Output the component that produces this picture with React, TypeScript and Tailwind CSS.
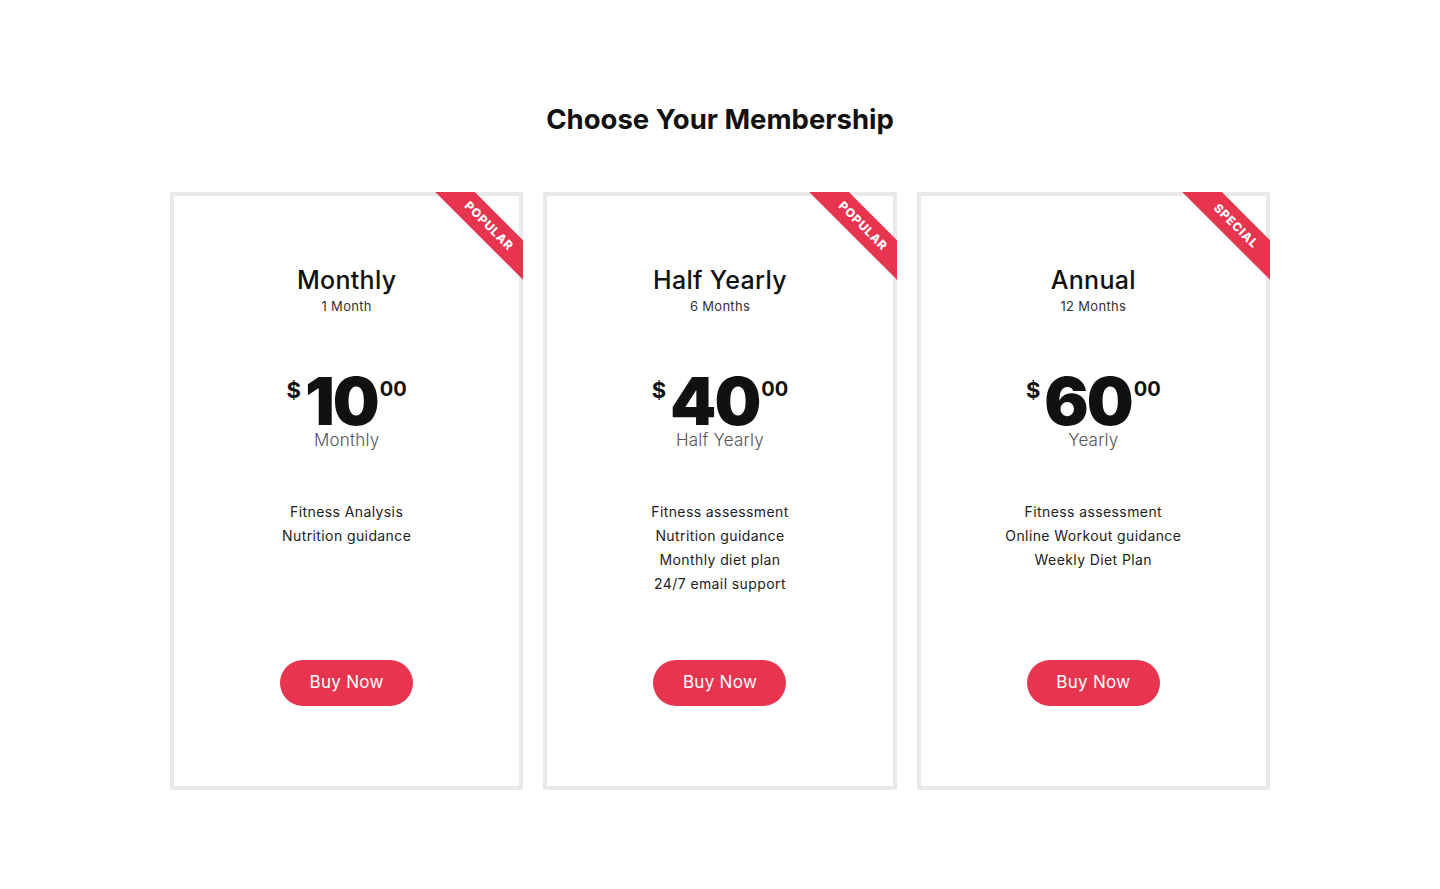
import React from "react";

type Plan = {
  name: string;
  duration: string;
  price: string;
  period: string;
  badge: string;
  features: string[];
};

const plans: Plan[] = [
  {
    name: "Monthly",
    duration: "1 Month",
    price: "10",
    period: "Monthly",
    badge: "POPULAR",
    features: ["Fitness Analysis", "Nutrition guidance"],
  },
  {
    name: "Half Yearly",
    duration: "6 Months",
    price: "40",
    period: "Half Yearly",
    badge: "POPULAR",
    features: [
      "Fitness assessment",
      "Nutrition guidance",
      "Monthly diet plan",
      "24/7 email support",
    ],
  },
  {
    name: "Annual",
    duration: "12 Months",
    price: "60",
    period: "Yearly",
    badge: "SPECIAL",
    features: ["Fitness assessment", "Online Workout guidance", "Weekly Diet Plan"],
  },
];

function PlanCard({ plan }: { plan: Plan }) {
  return (
    <div className="relative h-[598px] overflow-hidden bg-[#e9e9e9] p-[4px]">
      <div className="flex h-full flex-col items-center bg-white pt-[68px] pb-[80px] text-center">
        <h3 className="text-[25px] leading-[32px] font-medium tracking-[0.3px] text-[#111]">
          {plan.name}
        </h3>
        <p className="text-[13px] leading-[20px] tracking-[0.3px] text-[#333]">{plan.duration}</p>

        {/* Price */}
        <div className="mt-[60px] flex items-start justify-center text-[#111]">
          <span className="mt-[3px] mr-[4px] text-[22px] leading-none font-bold">$</span>
          <span className="text-[66px] leading-[50px] font-black tracking-[-2px]">{plan.price}</span>
          <span className="mt-[3px] ml-[2px] text-[20px] leading-none font-bold">00</span>
        </div>
        <p className="mt-[4px] text-[17px] leading-[20px] font-light tracking-[0.2px] text-[#555]">
          {plan.period}
        </p>

        <ul className="mt-[50px] flex-1 text-[14px] leading-[24px] tracking-[0.4px] text-[#222]">
          {plan.features.map((f) => (
            <li key={f}>{f}</li>
          ))}
        </ul>

        <button className="h-[46px] w-[133px] rounded-full bg-[#e8354f] text-[17px] tracking-[0.3px] text-white">
          Buy Now
        </button>
      </div>

      {/* Corner ribbon */}
      <div className="absolute top-[20px] right-[-36px] flex h-[28px] w-[140px] rotate-45 items-center justify-center bg-[#e8354f] text-[12px] font-extrabold tracking-[0.8px] text-white">
        {plan.badge}
      </div>
    </div>
  );
}

export default function App() {
  return (
    <div className="min-h-screen bg-white pt-[101px] font-['Inter',sans-serif]">
      <h2 className="text-center text-[27.5px] leading-[36px] font-bold text-[#111]">
        Choose Your Membership
      </h2>
      <div className="mx-auto mt-[55px] grid w-[1100px] grid-cols-3 gap-[20px]">
        {plans.map((p) => (
          <PlanCard key={p.name} plan={p} />
        ))}
      </div>
    </div>
  );
}
